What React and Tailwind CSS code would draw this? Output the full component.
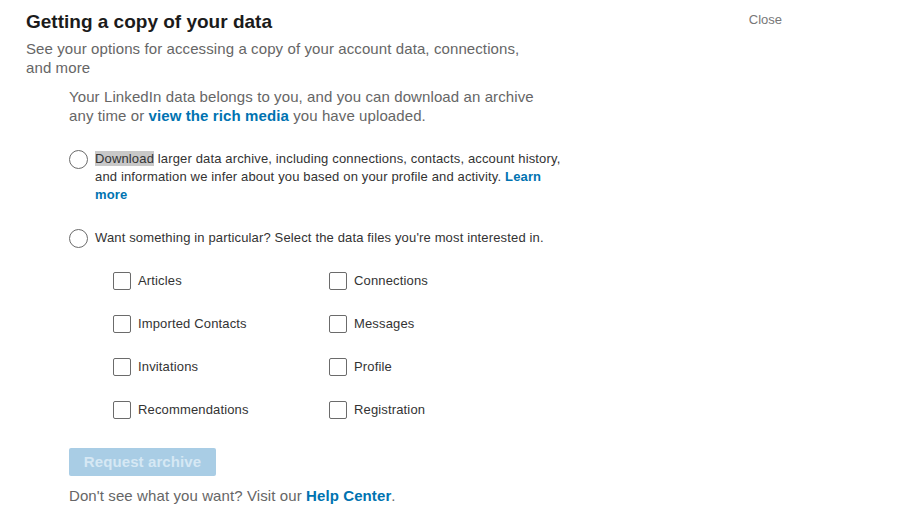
import React from "react";

function Radio() {
  return (
    <span className="shrink-0 w-[19px] h-[19px] rounded-full border border-[#6b6b6b] bg-white" />
  );
}

function Check({ label }) {
  return (
    <div className="flex items-center h-[43px]">
      <span className="shrink-0 w-[18px] h-[18px] rounded-[2px] border border-[#6b6b6b] bg-white" />
      <span className="ml-[7px] text-[13px] tracking-[0.15px] text-[#333]">{label}</span>
    </div>
  );
}

export default function App() {
  const items = [
    "Articles",
    "Connections",
    "Imported Contacts",
    "Messages",
    "Invitations",
    "Profile",
    "Recommendations",
    "Registration",
  ];
  return (
    <div className="w-[912px] h-[524px] bg-white font-['Liberation_Sans',Arial,sans-serif] overflow-hidden">
      <div className="pt-[10px] pl-[26px] pr-[130px]">
        <div className="flex justify-between items-start">
          <h1 className="text-[19px] leading-[24px] font-bold text-[#1b1b1b]">
            Getting a copy of your data
          </h1>
          <button className="mt-[1px] text-[13px] leading-[18px] text-[#777]">Close</button>
        </div>
        <p className="mt-[5px] w-[505px] text-[15px] leading-[19px] tracking-[0.1px] text-[#666]">
          See your options for accessing a copy of your account data, connections, and more
        </p>

        <div className="ml-[43px]">
          <p className="mt-[10px] w-[475px] text-[15px] leading-[19px] tracking-[0.1px] text-[#666]">
            Your LinkedIn data belongs to you, and you can download an archive any time or{" "}
            <span className="font-bold text-[#0073b1]">view the rich media</span> you have uploaded.
          </p>

          <div className="mt-[25px] flex items-start">
            <div className="h-[18px] flex items-center"><Radio /></div>
            <p className="ml-[7px] w-[470px] text-[13px] leading-[18px] tracking-[0.15px] text-[#333]">
              <span className="bg-[#c8c8c8]">Download</span> larger data archive, including
              connections, contacts, account history, and information we infer about you based on
              your profile and activity.{" "}
              <span className="font-bold text-[#0073b1]">Learn more</span>
            </p>
          </div>

          <div className="mt-[25px] flex items-start">
            <div className="h-[18px] flex items-center"><Radio /></div>
            <p className="ml-[7px] text-[13px] leading-[18px] tracking-[0.15px] text-[#333]">
              Want something in particular? Select the data files you're most interested in.
            </p>
          </div>

          <div className="mt-[12px] ml-[44px] grid grid-cols-[216px_216px]">
            {items.map((t) => (
              <Check key={t} label={t} />
            ))}
          </div>

          <button className="mt-[17px] h-[28px] w-[147px] rounded-[2px] bg-[#a9cde5] text-[15px] font-bold tracking-[0.1px] text-[#d6e8f4]">
            Request archive
          </button>

          <p className="mt-[10px] text-[15px] leading-[19px] tracking-[0.1px] text-[#666]">
            Don't see what you want? Visit our{" "}
            <span className="font-bold text-[#0073b1]">Help Center</span>.
          </p>
        </div>
      </div>
    </div>
  );
}
